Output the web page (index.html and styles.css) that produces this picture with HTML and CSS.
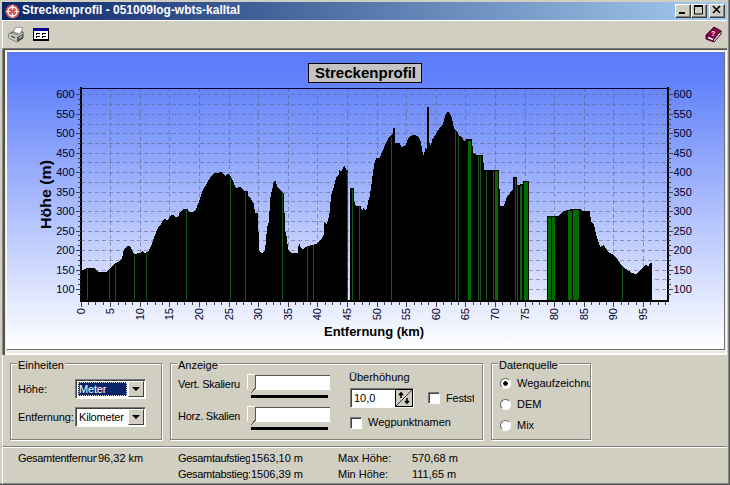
FILE: index.html
```html
<!DOCTYPE html>
<html lang="de">
<head>
    <meta charset="UTF-8">
    <title>Streckenprofil - 051009log-wbts-kalltal</title>
    <link rel="stylesheet" href="styles.css">
</head>
<body>
    <div class="window">
        <div class="titlebar">
            <svg class="app-icon" width="15" height="15" viewBox="0 0 15 15">
                <circle cx="7.5" cy="7.5" r="7" fill="#d8544c"/>
                <circle cx="7.5" cy="7.5" r="4.5" fill="none" stroke="#fff" stroke-width="1.3"/>
                <path d="M7.5 1v13M1 7.5h13" stroke="#fff" stroke-width="1.2"/>
                <circle cx="7.5" cy="7.5" r="2" fill="#d8544c"/>
            </svg>
            <svg class="title" width="240" height="18">
                <text x="0" y="12" textLength="218" lengthAdjust="spacingAndGlyphs">Streckenprofil - 051009log-wbts-kalltal</text>
            </svg>
            <div class="window-buttons">
                <button><svg width="12" height="10"><path d="M2 8h6" stroke="#000" stroke-width="2"/></svg></button>
                <button><svg width="12" height="10"><path d="M1.5 1v8h8V1M1 1h9" fill="none" stroke="#000"/><path d="M1 1h9" stroke="#000" stroke-width="2"/></svg></button>
                <button class="close"><svg width="12" height="10"><path d="M2 1l7 7M9 1L2 8" stroke="#000" stroke-width="1.7"/></svg></button>
            </div>
        </div>

        <div class="toolbar">
            <svg width="17" height="17" viewBox="0 0 17 17">
                <path d="M1 8l5-3 9 1v6l-6 4-8-4z" fill="#99998f" stroke="#444" stroke-width="1"/>
                <path d="M1 8l8 3v5l-8-4z" fill="#c9c9c0"/>
                <path d="M5 6l3-5 7 1-3 6z" fill="#fff" stroke="#777" stroke-width=".7"/>
                <path d="M9 11l6-4v5l-6 4z" fill="#55554f"/>
                <path d="M3 10l4 2" stroke="#222"/>
                <path d="M2 8l8 2 5-3" fill="none" stroke="#eee" stroke-width=".8"/>
                <path d="M11 12l3-2" stroke="#ddd"/>
            </svg>
            <svg class="props" width="16" height="13" viewBox="0 0 16 13" shape-rendering="crispEdges">
                <rect width="16" height="13" fill="#000"/>
                <rect x="1" y="1" width="14" height="10" fill="#fff"/>
                <rect x="0" y="0" width="15" height="3" fill="#000092"/>
                <path d="M3 5h4v2H3zM9 5h4v2H9zM3 8h4v2H3zM9 8h4v2H9z" fill="#000"/>
                <path d="M4 6h3M10 6h3M4 9h3M10 9h3" stroke="#fff"/>
            </svg>
            <svg class="help" width="17" height="17" viewBox="0 0 17 17">
                <path d="M1 9l8-8 7 4-7 9z" fill="#8a0848" stroke="#300018"/>
                <path d="M1 9v4l8 3 7-8V5l-7 8z" fill="#fff" stroke="#400020"/>
                <path d="M2 11l7 3 6-7" fill="none" stroke="#999" stroke-width=".7"/>
                <path d="M1 9v4l8 3v-3z" fill="#74003c"/>
                <path d="M3 11.5l5 2" stroke="#fff" stroke-width="1.4"/>
                <text x="6" y="10" class="help-mark">?</text>
            </svg>
        </div>

        <div class="chart-frame">
            <svg class="chart" width="719" height="299" viewBox="7 52 717 297">
                <g id="grid"></g>
                <path class="profile" d="M81 302V271L83 270 87 268H94L98 272H106L110 268 114 264 120 261 122 258 124 249 127 246H130L132 250 134 254 140 253 142 251 144 253 148 252 152 244 155 235 158 228 161 224 164 219 168 220 171 215H173L175 217 178 217 180 212 184 209H188L189 212H193L196 209 198 204 200 199 203 190 207 183 211 176 215 173 222 172 225 176 228 174 231 177 233 181 236 188 240 187 244 191H248V195L251 199 254 204 255 213H258L259 250 261 253H263L265 250 266 240 267 228 269 222 270 200 272 190 274 181H276L277 186 281 191 284 194 285 230 287 238 288 250 291 253H298L299 240 300 247 303 250 305 247 312 245 318 243 322 238 324 234V222L327 224 328 221 330 210 331 195 333 190 336 178 339 174V169L341 172 343 168 345 165 346 170H348V302ZM350 302V188H354V201L356 206H361L362 211 364 207 365 211 367 208 368 202 370 195 372 180 374 165 376 158H380L382 152 386 143 389 137 393 134V128H395V143H400L401 147 405 146 409 137 413 135 418 136 421 142 422 150 424 157 425 147 427 150V107H429V142L431 146 432 140 436 134 440 127 443 124 445 116 447 112H449L452 118 454 128 458 133V135L462 137 464 141 467 139H472L473 153 477 155H483L484 170H499L500 206H504L507 197 513 189V177H517V185L523 184V181H529V302ZM547 302V216H558L560 214 564 211 568 210 571 209H580L583 211 590 211 591 222 594 225 596 234 600 247 604 245 608 252 612 254 618 260 622 266 626 269 632 273 636 274 640 270 645 265 649 266 650 263H651L652 262V302Z"/>
                <g id="marks"></g>
                <path class="gap" d="M349.5 189V301"/>
                <path class="frame-top" d="M81 88.5H668"/>
                <path class="frame" d="M81 87V302M80 301H669M668 87V302"/>
                <g id="labels"></g>
                <text class="axis-title" transform="translate(51 229) rotate(-90)" textLength="69" lengthAdjust="spacingAndGlyphs">Höhe (m)</text>
                <text class="axis-title small" x="324" y="336" textLength="100" lengthAdjust="spacingAndGlyphs">Entfernung (km)</text>
                <rect class="title-box" x="308.5" y="63.5" width="113" height="19"/>
                <text class="chart-title" x="315" y="78" textLength="101" lengthAdjust="spacingAndGlyphs">Streckenprofil</text>
            </svg>
        </div>

        <div class="controls">
            <div class="group units">
                <span class="legend">Einheiten</span>
                <div class="row">
                    <label>Höhe:</label>
                    <div class="select"><span class="selected">Meter</span><i class="arrow"></i></div>
                </div>
                <div class="row">
                    <label>Entfernung:</label>
                    <div class="select"><span>Kilometer</span><i class="arrow"></i></div>
                </div>
            </div>

            <div class="group display">
                <span class="legend">Anzeige</span>
                <div class="sliders">
                    <div class="row">
                        <label>Vert. Skalierung</label>
                        <svg class="slider" width="88" height="29"><use href="#slider-shape"/></svg>
                    </div>
                    <div class="row">
                        <label>Horz. Skalierung</label>
                        <svg class="slider" width="88" height="29"><use href="#slider-shape"/></svg>
                    </div>
                </div>
                <div class="exaggeration">
                    <span>Überhöhung</span>
                    <div class="spin-row">
                        <div class="spin">
                            <span>10,0</span>
                            <svg width="18" height="18">
                                <rect x=".5" y=".5" width="17" height="17" fill="#d1cec2" stroke="#000"/>
                                <path d="M1 17L17 1" stroke="#333"/>
                                <path d="M6 9V4M4 6l2-2 2 2M12 9v5M10 12l2 2 2-2" fill="none" stroke="#000" stroke-width="1.6"/>
                            </svg>
                        </div>
                        <i class="checkbox"></i>
                        <span class="fixed">Feststellen</span>
                    </div>
                    <div class="check-row"><i class="checkbox"></i><span>Wegpunktnamen</span></div>
                </div>
            </div>

            <div class="group source">
                <span class="legend">Datenquelle</span>
                <div class="radio-row"><i class="radio checked"></i><span>Wegaufzeichnung</span></div>
                <div class="radio-row"><i class="radio"></i><span>DEM</span></div>
                <div class="radio-row"><i class="radio"></i><span>Mix</span></div>
            </div>
        </div>

        <div class="status">
            <span class="name">Gesamtentfernung:</span><span>96,32 km</span>
            <span class="name">Gesamtaufstieg:</span><span>1563,10 m</span>
            <span>Max Höhe:</span><span>570,68 m</span>
            <span></span><span></span>
            <span class="name">Gesamtabstieg:</span><span>1506,39 m</span>
            <span>Min Höhe:</span><span>111,65 m</span>
        </div>
    </div>

    <svg width="0" height="0" class="defs">
        <defs>
            <g id="slider-shape" shape-rendering="crispEdges">
                <rect x="5" y="3" width="79" height="15" fill="#fff"/>
                <path d="M7 3.500H83" stroke="#555"/>
                <path d="M83.500 3v14" stroke="#d1cec2"/>
                <rect x="4" y="23" width="77" height="3" fill="#000"/>
                <path d="M.5 2.500H8V17L4 21 .5 17z" fill="#d1cec2"/>
                <path d="M.5 17V2.500H8" fill="none" stroke="#fff"/>
                <path d="M8.500 3V16L4 21" fill="none" stroke="#555"/>
            </g>
        </defs>
    </svg>
    <script src="chart.js"></script>
</body>
</html>
```
FILE: styles.css
```css
body {
    margin: 0;
    width: 730px;
    height: 485px;
    overflow: hidden;
    background-color: #d1cec2;
    font-family: "Liberation Sans", Arial, sans-serif;
    font-size: 11px;
    line-height: 13px;
    color: #000;
}

.defs {
    position: absolute;
}

.window {
    box-sizing: border-box;
    width: 730px;
    height: 485px;
    padding: 2px 3px 0 2px;
    display: flex;
    flex-direction: column;
    box-shadow: inset -1px -1px #555, inset -2px -2px #8a887e;
}

/* Title bar and toolbar */
.titlebar {
    height: 18px;
    display: flex;
    align-items: center;
    background: linear-gradient(to right, #0b2768, #a6caf0);
    padding: 0 2px 0 3px;
}

.title {
    margin-left: 2px;
    font-size: 12px;
    font-weight: bold;
    fill: #fff;
}

.window-buttons {
    display: flex;
    margin-left: auto;
}

.window-buttons button {
    box-sizing: border-box;
    width: 16px;
    height: 14px;
    padding: 0 0 0 1px;
    border: 1px solid;
    border-color: #fff #404040 #404040 #fff;
    background-color: #d1cec2;
    box-shadow: inset -1px -1px #808080;
    display: flex;
}

.window-buttons .close {
    margin-left: 2px;
}

.toolbar {
    box-sizing: border-box;
    height: 29px;
    display: flex;
    align-items: center;
    padding: 0 5px 0 5px;
    border-top: 1px solid #fff;
    border-left: 1px solid #fff;
    border-bottom: 1px solid #777;
}

.toolbar .props {
    margin-left: 8px;
}

.toolbar .help {
    margin-left: auto;
}

.help-mark {
    font-size: 7px;
    font-weight: bold;
    fill: #fff;
}

/* Chart */
.chart-frame {
    box-sizing: border-box;
    height: 306px;
    padding: 2px 0 3px 3px;
    border-left: 1px solid #8a887e;
    box-shadow: inset 2px 1px #55554f, inset -1px -2px #fff;
    background-color: #eeece2;
}

.chart {
    display: block;
    box-sizing: border-box;
    border-top: 1px solid #fff;
    border-left: 1px solid #fff;
    border-right: 1px solid #777;
    border-bottom: 1px solid #777;
    background: linear-gradient(#5a7cfa 0%, #5f80fa 8%, #ffffff 100%);
    font-size: 11px;
}

.grid-line {
    stroke: rgba(95, 95, 125, 0.55);
    stroke-dasharray: 4 3;
    shape-rendering: crispEdges;
}

.tick {
    stroke: #444;
    shape-rendering: crispEdges;
}

.profile {
    fill: #000;
    shape-rendering: crispEdges;
}

.mark {
    fill: #006c00;
    shape-rendering: crispEdges;
}

.mark.thin {
    fill: #17551c;
}

.gap {
    stroke: #c5d3f5;
}

.frame-top {
    stroke: #000030;
}

.frame {
    fill: none;
    stroke: #000;
    stroke-width: 2;
    shape-rendering: crispEdges;
}

.axis-label {
    fill: #000028;
}

.axis-title,
.chart-title {
    font-size: 14.5px;
    font-weight: bold;
}

.axis-title.small {
    font-size: 12px;
}

.title-box {
    fill: #c3c3c3;
    stroke: #000;
}

/* Controls */
.controls {
    box-sizing: border-box;
    height: 92px;
    display: flex;
    align-items: flex-start;
    gap: 8px;
    padding: 8px 0 0 7px;
    border-left: 1px solid #fff;
    border-bottom: 1px solid #808080;
    white-space: nowrap;
}

.group {
    box-sizing: border-box;
    height: 77px;
    border: 1px solid #858379;
    box-shadow: 1px 1px #fff, inset 1px 1px #fff;
    position: relative;
}

.legend {
    position: absolute;
    top: -5px;
    left: 6px;
    padding: 0 1px;
    background-color: #d1cec2;
}

.units {
    width: 152px;
    padding: 15px 0 0 7px;
}

.units .row {
    display: flex;
    align-items: center;
    height: 20px;
    margin-bottom: 8px;
}

.units label {
    width: 57px;
    letter-spacing: -0.1px;
}

.select {
    box-sizing: border-box;
    width: 71px;
    height: 20px;
    display: flex;
    padding: 1px;
    background-color: #fff;
    border: 1px solid;
    border-color: #777 #fff #fff #777;
    box-shadow: inset 1px 1px #404040;
}

.select span {
    flex: 1;
    padding-left: 2px;
    line-height: 17px;
    letter-spacing: -0.2px;
}

.select .selected {
    margin: 1px;
    padding-left: 1px;
    line-height: 14px;
    color: #fff;
    background-color: #0a246a;
    outline: 1px dotted #ddd;
    outline-offset: -1px;
}

.arrow {
    width: 14px;
    border: 1px solid;
    border-color: #fff #404040 #404040 #fff;
    background-color: #d1cec2;
    display: flex;
    align-items: center;
    justify-content: center;
}

.arrow::before {
    content: "";
    border: 4px solid transparent;
    border-top-color: #000;
    border-bottom: 0;
}

.display {
    width: 313px;
    display: flex;
    padding: 7px 0 0 7px;
}

.sliders .row {
    display: flex;
    height: 32px;
}

.sliders label {
    width: 62px;
    height: 14px;
    margin: 7px 7px 0 0;
    overflow: hidden;
    letter-spacing: -0.25px;
}

.slider {
    margin-top: 1px;
}

.exaggeration {
    padding-left: 14px;
}

.spin-row {
    display: flex;
    align-items: center;
    height: 20px;
    margin-top: 4px;
    padding-left: 1px;
}

.spin {
    box-sizing: border-box;
    width: 64px;
    height: 20px;
    margin-right: 14px;
    display: flex;
    justify-content: space-between;
    border: 1px solid;
    border-color: #777 #fff #fff #777;
    box-shadow: inset 1px 1px #404040;
    background-color: #fff;
}

.spin span {
    padding: 3px 0 0 3px;
}

.fixed {
    width: 28px;
    margin-left: 6px;
    overflow: hidden;
    letter-spacing: -0.2px;
}

.check-row {
    display: flex;
    align-items: center;
    margin-top: 8px;
    padding-left: 1px;
    gap: 6px;
}

.checkbox {
    box-sizing: border-box;
    flex: none;
    width: 12px;
    height: 12px;
    border: 1px solid;
    border-color: #777 #fff #fff #777;
    box-shadow: inset 1px 1px #404040;
    background-color: #fff;
}

.source {
    width: 100px;
    padding: 9px 0 0 8px;
}

.radio-row {
    display: flex;
    align-items: center;
    gap: 6px;
    height: 21px;
    overflow: hidden;
}

.radio {
    box-sizing: border-box;
    flex: none;
    width: 11px;
    height: 11px;
    border: 1px solid;
    border-color: #666 #fff #fff #666;
    border-radius: 50%;
    background-color: #fff;
}

.radio.checked {
    background: radial-gradient(circle, #000 2px, #fff 2.5px);
}

/* Status */
.status {
    display: grid;
    grid-template-columns: 80px 80px 73px 87px 74px 80px;
    grid-auto-rows: 16px;
    padding: 4px 0 0 15px;
    border-top: 1px solid #fff;
    border-left: 1px solid #fff;
    white-space: nowrap;
}

.status span {
    overflow: hidden;
}

.status .name {
    margin-right: 1px;
    letter-spacing: -0.3px;
}
```
FILE: chart.js
```js
const NS = 'http://www.w3.org/2000/svg';
const LEFT = 81, RIGHT = 668, TOP = 88, BOTTOM = 302;

// [x, top, width] of the waypoint marks
const marks = [
    [87, 269, 1], [109, 270, 1], [115, 265, 1], [134, 255, 1], [146, 253, 1], [186, 210, 1],
    [230, 177, 1], [245, 192, 1], [282, 192, 1], [307, 247, 1], [313, 245, 1], [347, 172, 1],
    [352, 189, 1], [359, 207, 1], [391, 137, 1], [455, 131, 1], [458, 136, 1], [468, 141, 3],
    [478, 156, 1], [480, 156, 1], [486, 171, 1], [493, 171, 1], [495, 171, 3], [515, 178, 1],
    [517, 186, 1], [520, 186, 2], [524, 182, 4], [548, 217, 3], [552, 217, 3],
    [568, 211, 4], [573, 210, 6], [622, 267, 1]
];

function add(parent, tag, cls, attrs) {
    const el = document.createElementNS(NS, tag);
    el.setAttribute('class', cls);
    for (const key in attrs) el.setAttribute(key, attrs[key]);
    document.getElementById(parent).appendChild(el);
    return el;
}

function line(parent, cls, x1, y1, x2, y2) {
    add(parent, 'line', cls, { x1, y1, x2, y2 });
}

// height axis, a tick every 12.5 m and a grid line every 25 m
for (let m = 87.5; m <= 612.5; m += 12.5) {
    const y = Math.round(289 - (m - 100) * 0.3894) + 0.5;
    const size = m % 50 === 0 ? 4 : 2;
    if (m % 25 === 0) line('grid', 'grid-line', LEFT, y, RIGHT, y);
    line('labels', 'tick', LEFT - 1 - size, y, LEFT, y);
    line('labels', 'tick', RIGHT, y, RIGHT + 1 + size, y);
    if (m % 50 === 0) {
        add('labels', 'text', 'axis-label', { x: 74.5, y: y + 3.5, 'text-anchor': 'end' }).textContent = m;
        add('labels', 'text', 'axis-label', { x: 673.5, y: y + 3.5 }).textContent = m;
    }
}

// distance axis, four ticks and one grid line every 5 km
for (let km = 0; km <= 98.75; km += 1.25) {
    const x = Math.round(80.5 + km * 5.92) + 0.5;
    const major = km % 5 === 0;
    line('labels', 'tick', x, BOTTOM, x, BOTTOM + (major ? 5 : 3));
    if (major) {
        if (km > 0) line('grid', 'grid-line', x, TOP, x, BOTTOM);
        add('labels', 'text', 'axis-label', {
            transform: `translate(${x + 3.5} 308) rotate(-90)`, 'text-anchor': 'end'
        }).textContent = km;
    }
}

for (const [x, y, width] of marks) {
    add('marks', 'rect', width === 1 ? 'mark thin' : 'mark', { x, y, width, height: 300 - y });
}
```
